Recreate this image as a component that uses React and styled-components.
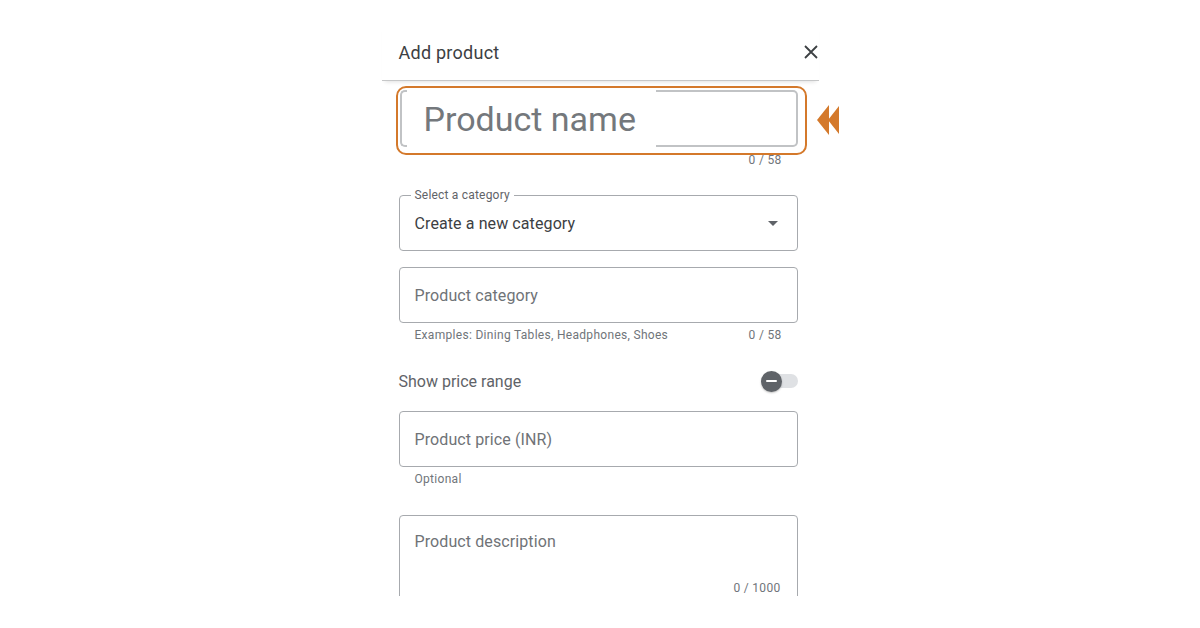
import styled, { createGlobalStyle } from "styled-components";

const Global = createGlobalStyle`
  body {
    margin: 0;
    background: #ffffff;
    font-family: Roboto, "Noto Sans", Arial, sans-serif;
  }
`;

const Page = styled.div`
  display: flex;
  justify-content: center;
  padding-top: 24px;
`;

const Panel = styled.div`
  width: 437px;
  height: 572px;
  overflow-x: visible;
  overflow-y: clip;
`;

const Header = styled.div`
  box-sizing: border-box;
  height: 57px;
  display: flex;
  align-items: center;
  justify-content: space-between;
  padding: 0 0 0 17px;
  border-bottom: 1px solid #c6c7c8;
  box-shadow: 0 4px 4px -3px rgba(0, 0, 0, 0.12);
`;

const Title = styled.div`
  font-size: 18px;
  letter-spacing: 0.25px;
  color: #3c4043;
`;

const CloseButton = styled.button`
  width: 16px;
  height: 16px;
  padding: 0;
  border: 0;
  background: none;
  display: flex;
  align-items: center;
  justify-content: center;
  margin-top: -1px;
  color: #3c4043;
`;

const Body = styled.div`
  padding: 0 21px 0 17px;
  display: flex;
  flex-direction: column;
`;

const NameFrame = styled.div`
  position: relative;
  margin: 5px -9px 0 -3px;
  border: 2px solid #d4792b;
  border-radius: 10px;
  padding: 2px 7px 6px 2px;
`;

const Pointer = styled.svg`
  position: absolute;
  left: calc(100% + 12px);
  top: 16px;
`;

const NameField = styled.div`
  display: flex;
  height: 57px;
`;

const Cap = styled.div`
  box-sizing: border-box;
  width: 7px;
  border: 2px solid #c1c3c5;
  border-right: 0;
  border-radius: 5px 0 0 5px;
`;

const NameGap = styled.div`
  width: 249px;
  display: flex;
  align-items: center;
  padding-left: 17px;
  box-sizing: border-box;
  font-size: 34px;
  color: #74787c;
  white-space: nowrap;
`;

const CapEnd = styled.div`
  box-sizing: border-box;
  flex: 1;
  border: 2px solid #c1c3c5;
  border-left: 0;
  border-radius: 0 5px 5px 0;
`;

const HelperRow = styled.div`
  display: flex;
  justify-content: space-between;
  padding: 0 16px;
  margin-top: ${(p) => p.$top ?? 4}px;
  font-size: 12px;
  line-height: 16px;
  letter-spacing: 0.3px;
  color: #70757a;
`;

const Spacer = styled.span``;

const Outlined = styled.div`
  position: relative;
  box-sizing: border-box;
  height: 56px;
  margin-top: ${(p) => p.$top || 0}px;
  border: 1px solid #a7aaae;
  border-radius: 4px;
  display: flex;
  align-items: center;
  justify-content: space-between;
  padding: 0 19px 0 15px;
  font-size: 16px;
  letter-spacing: 0.1px;
  color: ${(p) => (p.$value ? "#3c4043" : "#6f7377")};
`;

const FloatLabel = styled.span`
  position: absolute;
  top: -8px;
  left: 11px;
  padding: 0 4px;
  background: #ffffff;
  font-size: 12px;
  line-height: 14px;
  letter-spacing: 0.2px;
  color: #5f6368;
`;

const Caret = styled.span`
  width: 0;
  height: 0;
  border-left: 5px solid transparent;
  border-right: 5px solid transparent;
  border-top: 5px solid #5f6368;
`;

const ToggleRow = styled.div`
  height: 32px;
  margin-top: 22px;
  display: flex;
  align-items: center;
  justify-content: space-between;
  font-size: 16px;
  color: #5f6368;
`;

const Track = styled.div`
  width: 37px;
  height: 14px;
  border-radius: 7px;
  background: #dfe1e4;
  display: flex;
  align-items: center;
`;

const Thumb = styled.div`
  width: 21px;
  height: 21px;
  border-radius: 50%;
  background: #5f6368;
  display: flex;
  align-items: center;
  justify-content: center;
  box-shadow: 0 1px 2px rgba(0, 0, 0, 0.25);
  &::after {
    content: "";
    width: 11px;
    height: 2px;
    border-radius: 1px;
    background: #ffffff;
  }
`;

const TextArea = styled.div`
  box-sizing: border-box;
  height: 96px;
  margin-top: 28px;
  border: 1px solid #a7aaae;
  border-radius: 4px;
  padding: 14px 16px 14px 15px;
  display: flex;
  flex-direction: column;
  justify-content: space-between;
  font-size: 16px;
  line-height: 24px;
  letter-spacing: 0.1px;
  color: #6f7377;
`;

const AreaCount = styled.div`
  align-self: flex-end;
  font-size: 12px;
  line-height: 16px;
  letter-spacing: 0.3px;
  color: #70757a;
`;

export default function App() {
  return (
    <>
      <Global />
      <Page>
        <Panel>
          <Header>
            <Title>Add product</Title>
            <CloseButton aria-label="Close">
              <svg width="14" height="14" viewBox="0 0 14 14">
                <path d="M1 1L13 13M13 1L1 13" stroke="currentColor" strokeWidth="1.8" />
              </svg>
            </CloseButton>
          </Header>
          <Body>
            <NameFrame>
              <NameField>
                <Cap />
                <NameGap>Product name</NameGap>
                <CapEnd />
              </NameField>
              <Pointer width="22" height="32" viewBox="0 0 22 32">
                <polygon points="0,16 12,1 12,31" fill="#d4792b" />
                <polygon points="11,16 22,2 22,30" fill="#d4792b" />
              </Pointer>
            </NameFrame>
            <HelperRow $top={-3}>
              <Spacer />
              <span>0 / 58</span>
            </HelperRow>

            <Outlined $top={27} $value>
              <FloatLabel>Select a category</FloatLabel>
              <span>Create a new category</span>
              <Caret />
            </Outlined>

            <Outlined $top={16}>
              <span>Product category</span>
            </Outlined>
            <HelperRow>
              <span>Examples: Dining Tables, Headphones, Shoes</span>
              <span>0 / 58</span>
            </HelperRow>

            <ToggleRow>
              <span>Show price range</span>
              <Track>
                <Thumb />
              </Track>
            </ToggleRow>

            <Outlined $top={14}>
              <span>Product price (INR)</span>
            </Outlined>
            <HelperRow>
              <span>Optional</span>
            </HelperRow>

            <TextArea>
              <span>Product description</span>
              <AreaCount>0 / 1000</AreaCount>
            </TextArea>
          </Body>
        </Panel>
      </Page>
    </>
  );
}
